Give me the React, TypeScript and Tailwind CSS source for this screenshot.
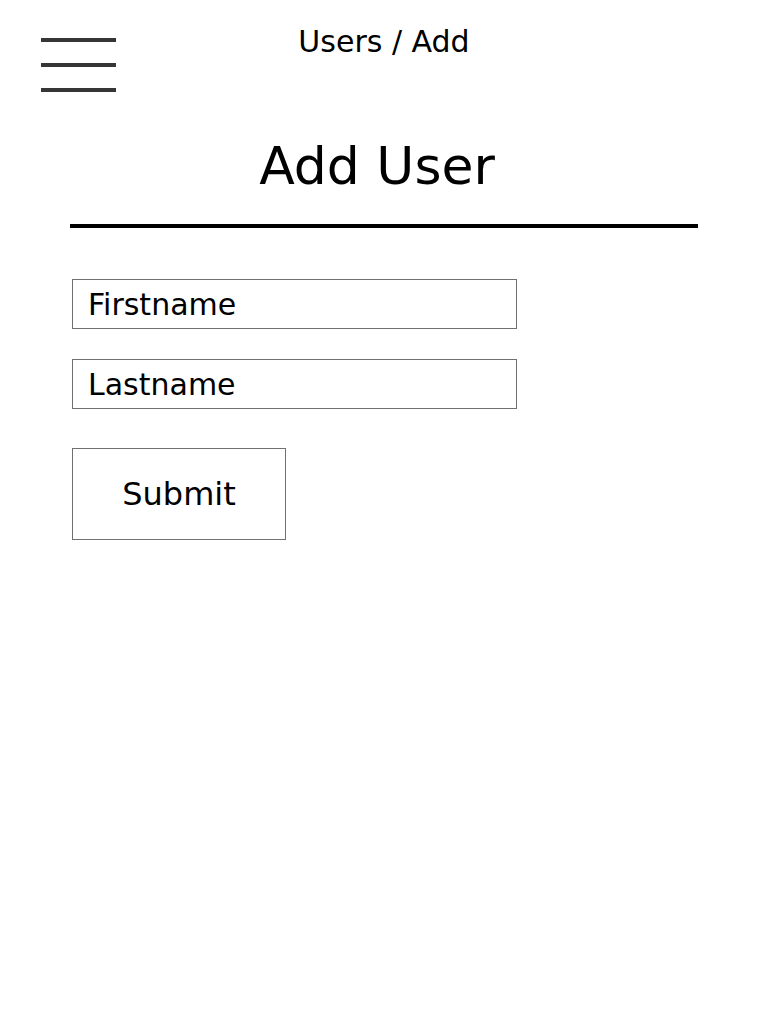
import React from "react";

export default function App() {
  const font = { fontFamily: '"Century Gothic", "DejaVu Sans", "Liberation Sans", sans-serif' };
  return (
    <div className="relative w-[768px] h-[1024px] bg-white text-black" style={font}>
      <button className="absolute left-[41px] top-[38px] flex flex-col gap-[21px]" aria-label="menu">
        <span className="block w-[75px] h-[4px] bg-[#363636]" />
        <span className="block w-[75px] h-[4px] bg-[#363636]" />
        <span className="block w-[75px] h-[4px] bg-[#363636]" />
      </button>
      <div className="pt-[22px] text-center text-[30px] leading-[40px]">Users / Add</div>
      <div className="mx-[70px] w-[628px]">
        <h1 className="mt-[74px] text-center text-[52px] leading-[60px] pr-[14px]">Add User</h1>
        <div className="mt-[28px] h-[4px] bg-black" />
        <form className="mt-[51px] ml-[2px] flex flex-col">
          <div className="w-[445px] h-[50px] border border-[#707070] flex items-center pl-[15px] text-[30px]">Firstname</div>
          <div className="mt-[30px] w-[445px] h-[50px] border border-[#707070] flex items-center pl-[15px] text-[30px]">Lastname</div>
          <div className="mt-[39px] w-[214px] h-[92px] border border-[#707070] flex items-center justify-center text-[32px]">Submit</div>
        </form>
      </div>
    </div>
  );
}
